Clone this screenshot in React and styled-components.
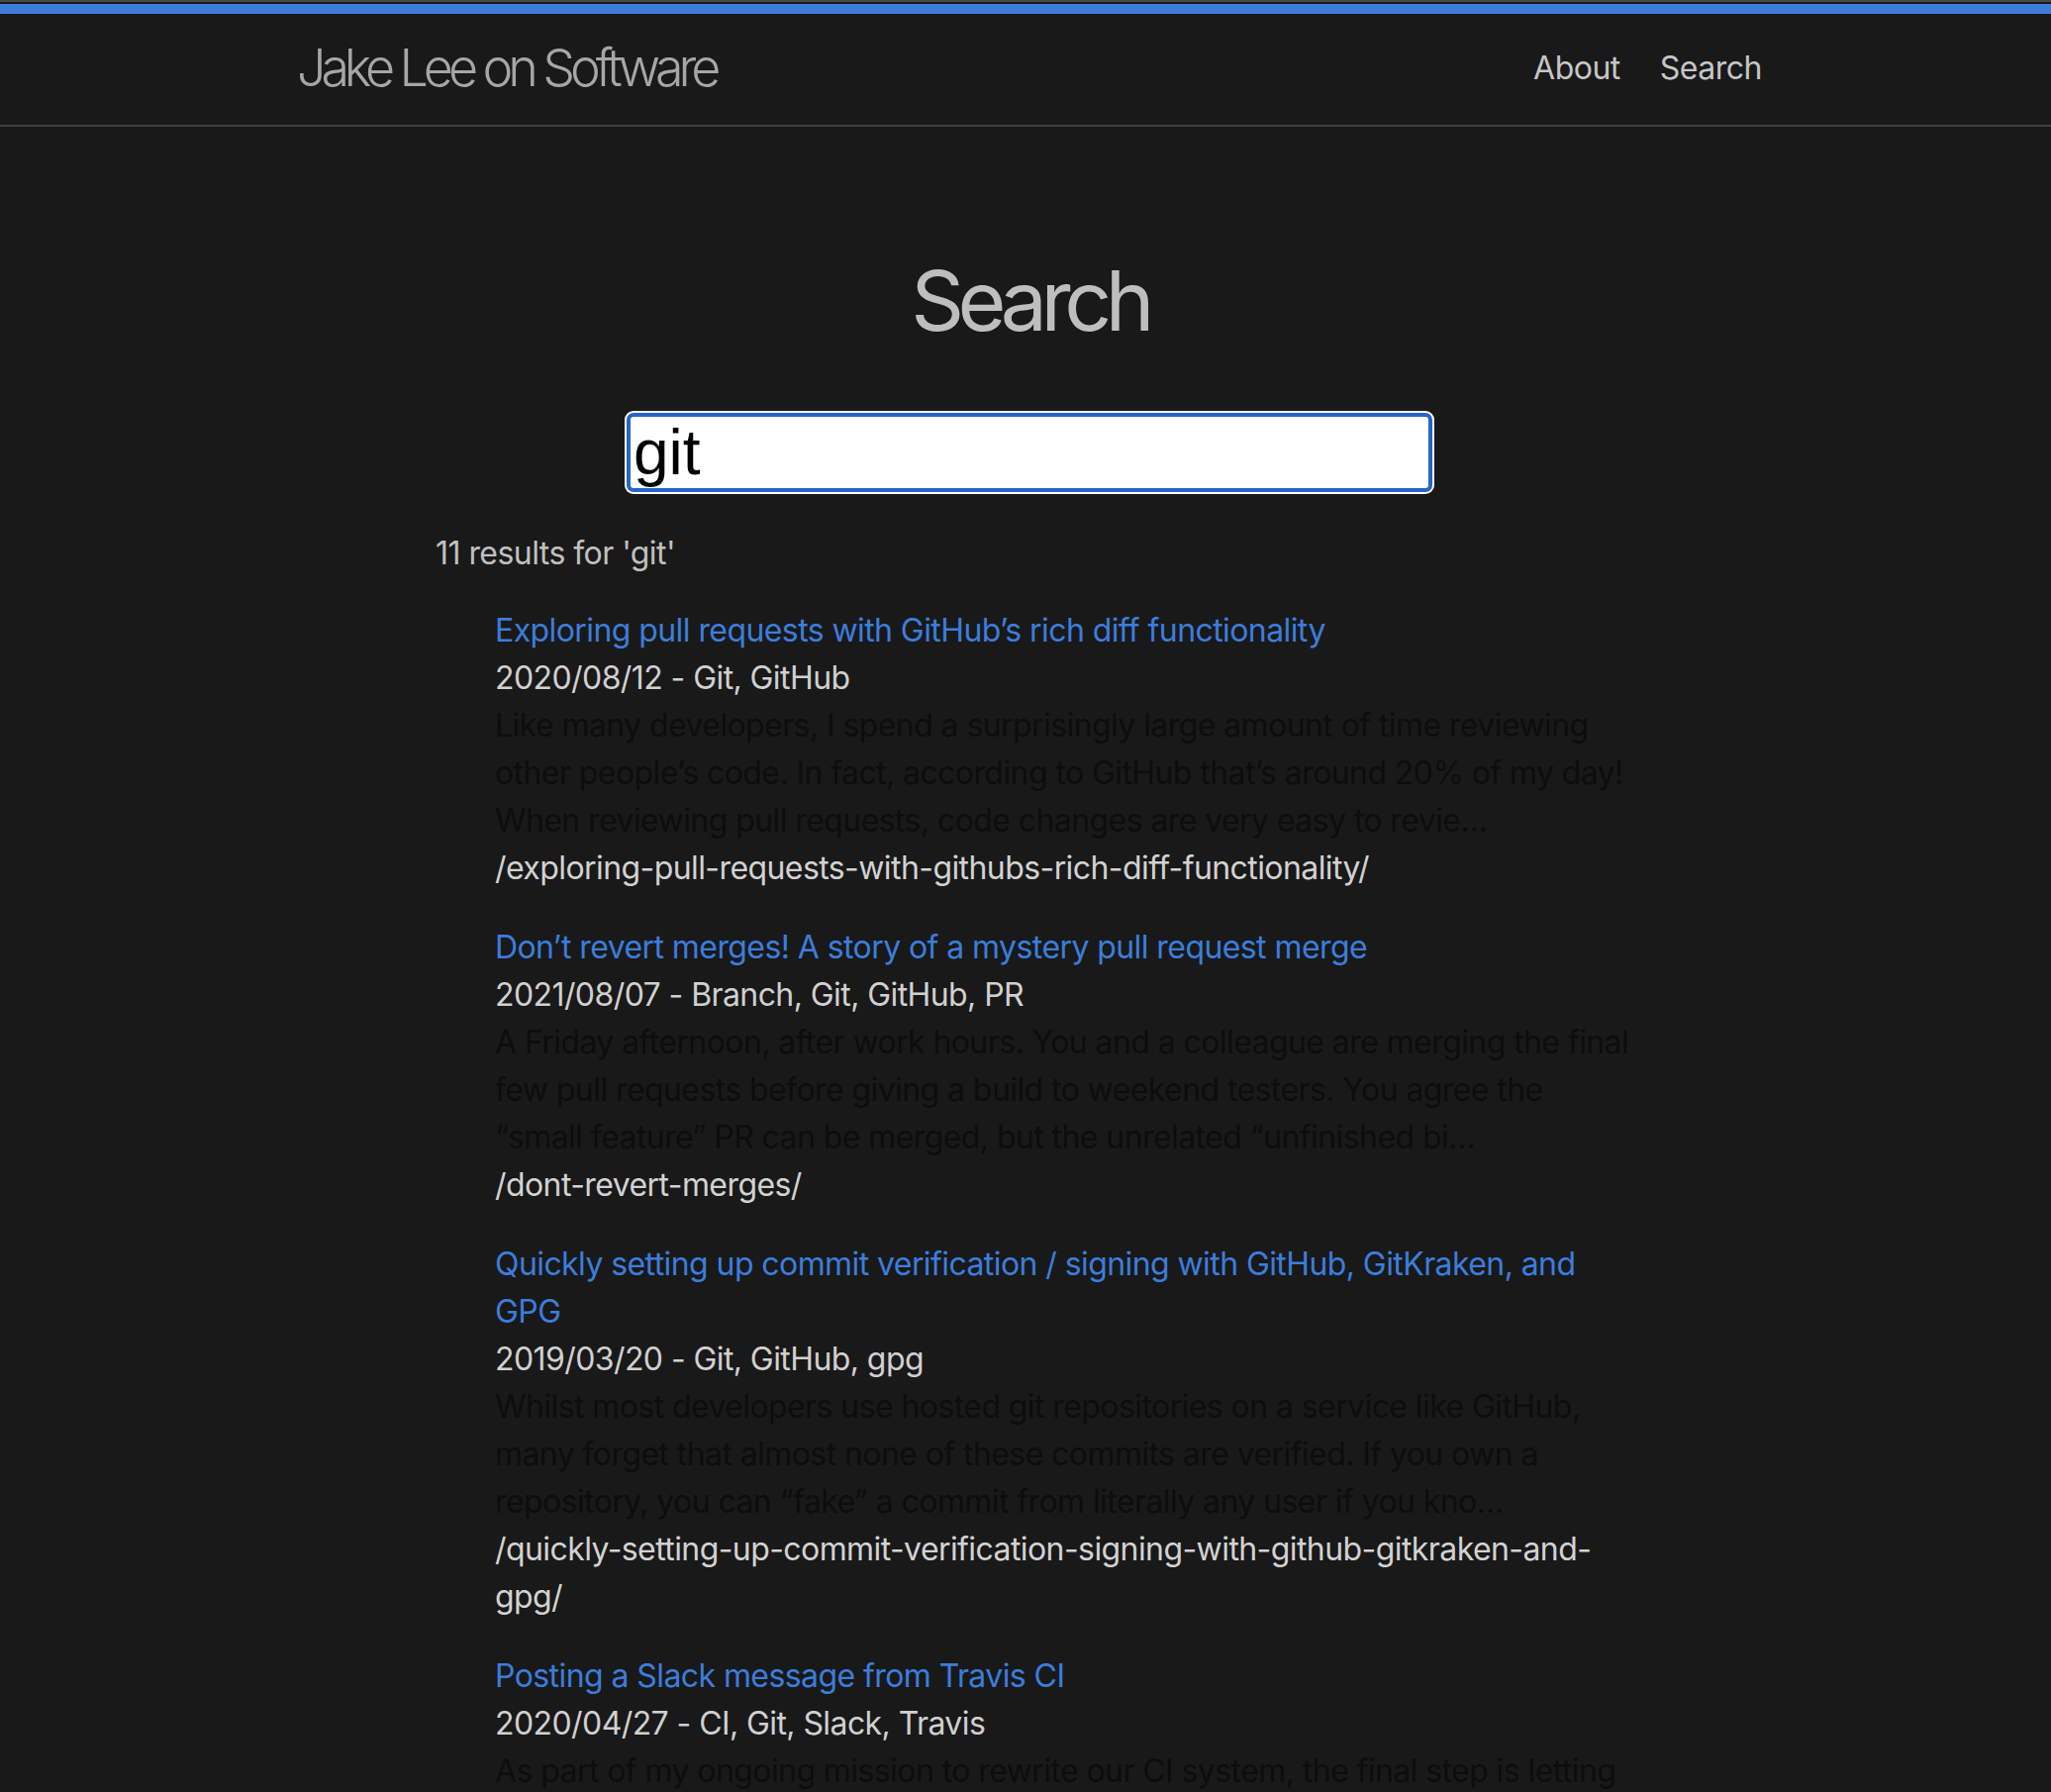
import React from "react";
import styled, { createGlobalStyle } from "styled-components";

const GlobalStyle = createGlobalStyle`
  html, body {
    margin: 0;
    padding: 0;
    background: #191919;
  }
  body {
    font-family: Inter, "Noto Sans", "Liberation Sans", sans-serif;
    -webkit-font-smoothing: antialiased;
  }
`;

const Page = styled.div`
  min-height: 1810px;
  background: #191919;
  padding-left: 8px;
`;

const Header = styled.header`
  margin-left: -8px;
  border-top: 2px solid #4a4a4a;
  border-bottom: 2px solid #3f3f3f;
  background: #191919;
`;

const Accent = styled.div`
  height: 10px;
  margin-top: 2px;
  background: #3d7cd9;
`;

const HeaderWrap = styled.div`
  max-width: 1480px;
  margin: 0 auto;
  padding: 0 60px 4px 68px;
  height: 108px;
  display: flex;
  align-items: center;
  justify-content: space-between;
`;

const SiteTitle = styled.a`
  font-family: Inter, "Liberation Sans", sans-serif;
  font-size: 52px;
  font-weight: 300;
  letter-spacing: -5.1px;
  color: #a6a6a6;
  text-decoration: none;
`;

const Nav = styled.nav`
  display: flex;
  gap: 40px;
`;

const NavLink = styled.a`
  font-size: 32px;
  letter-spacing: -0.5px;
  color: #c6c6c6;
  text-decoration: none;
`;

const Main = styled.main`
  max-width: 1200px;
  margin: 0 auto;
  padding-top: 126px;
`;

const Title = styled.h1`
  margin: 0;
  text-align: center;
  font-size: 84px;
  line-height: 100px;
  font-weight: 400;
  letter-spacing: -6.5px;
  color: #bebebe;
`;

const SearchRow = styled.div`
  display: flex;
  justify-content: center;
  margin-top: 63px;
`;

const SearchInput = styled.input`
  box-sizing: border-box;
  width: 814px;
  height: 80px;
  padding: 0 3px;
  border: 4px solid #2864c9;
  border-radius: 7px;
  box-shadow: 0 0 0 2px #ffffff;
  background: #ffffff;
  color: #000;
  font-family: "Liberation Sans", Arial, sans-serif;
  font-size: 64px;
  outline: none;
`;

const Count = styled.p`
  margin: 38px 0 0;
  font-size: 32px;
  line-height: 48px;
  letter-spacing: -0.55px;
  color: #c0c0c0;
`;

const Results = styled.ul`
  list-style: none;
  margin: 30px 0 0;
  padding: 0 0 0 60px;
  display: flex;
  flex-direction: column;
  gap: 32px;
`;

const Item = styled.li`
  font-size: 32px;
  line-height: 48px;
  letter-spacing: -0.58px;
  white-space: nowrap;
`;

const Line = styled.div`
  color: ${(p) => p.$color};
`;

const ItemLink = styled.a`
  display: block;
  color: #3c7ddc;
  text-decoration: none;
`;

const results = [
  {
    title: ["Exploring pull requests with GitHub\u2019s rich diff functionality"],
    meta: "2020/08/12 - Git, GitHub",
    excerpt: [
      "Like many developers, I spend a surprisingly large amount of time reviewing",
      "other people\u2019s code. In fact, according to GitHub that\u2019s around 20% of my day!",
      "When reviewing pull requests, code changes are very easy to revie\u2026",
    ],
    url: ["/exploring-pull-requests-with-githubs-rich-diff-functionality/"],
  },
  {
    title: ["Don\u2019t revert merges! A story of a mystery pull request merge"],
    meta: "2021/08/07 - Branch, Git, GitHub, PR",
    excerpt: [
      "A Friday afternoon, after work hours. You and a colleague are merging the final",
      "few pull requests before giving a build to weekend testers. You agree the",
      "\u201Csmall feature\u201D PR can be merged, but the unrelated \u201Cunfinished bi\u2026",
    ],
    url: ["/dont-revert-merges/"],
  },
  {
    title: [
      "Quickly setting up commit verification / signing with GitHub, GitKraken, and",
      "GPG",
    ],
    meta: "2019/03/20 - Git, GitHub, gpg",
    excerpt: [
      "Whilst most developers use hosted git repositories on a service like GitHub,",
      "many forget that almost none of these commits are verified. If you own a",
      "repository, you can \u201Cfake\u201D a commit from literally any user if you kno\u2026",
    ],
    url: [
      "/quickly-setting-up-commit-verification-signing-with-github-gitkraken-and-",
      "gpg/",
    ],
  },
  {
    title: ["Posting a Slack message from Travis CI"],
    meta: "2020/04/27 - CI, Git, Slack, Travis",
    excerpt: [
      "As part of my ongoing mission to rewrite our CI system, the final step is letting",
      "developers know when a build has finished. Since we use Slack for team",
      "communication, posting a message to a channel is the obvious so\u2026",
    ],
    url: ["/posting-a-slack-message-from-travis-ci/"],
  },
];

export default function App() {
  return (
    <>
      <GlobalStyle />
      <Page>
        <Header>
          <Accent />
          <HeaderWrap>
            <SiteTitle href="#">Jake Lee on Software</SiteTitle>
            <Nav>
              <NavLink href="#">About</NavLink>
              <NavLink href="#">Search</NavLink>
            </Nav>
          </HeaderWrap>
        </Header>
        <Main>
          <Title>Search</Title>
          <SearchRow>
            <SearchInput type="text" defaultValue="git" aria-label="Search" />
          </SearchRow>
          <Count>11 results for 'git'</Count>
          <Results>
            {results.map((r) => (
              <Item key={r.meta}>
                <ItemLink href="#">
                  {r.title.map((t) => (
                    <Line key={t}>{t}</Line>
                  ))}
                </ItemLink>
                <Line $color="#d0d0d0">{r.meta}</Line>
                {r.excerpt.map((t) => (
                  <Line key={t} $color="#0d0d0d">
                    {t}
                  </Line>
                ))}
                {r.url.map((t) => (
                  <Line key={t} $color="#d2d2d2">
                    {t}
                  </Line>
                ))}
              </Item>
            ))}
          </Results>
        </Main>
      </Page>
    </>
  );
}
